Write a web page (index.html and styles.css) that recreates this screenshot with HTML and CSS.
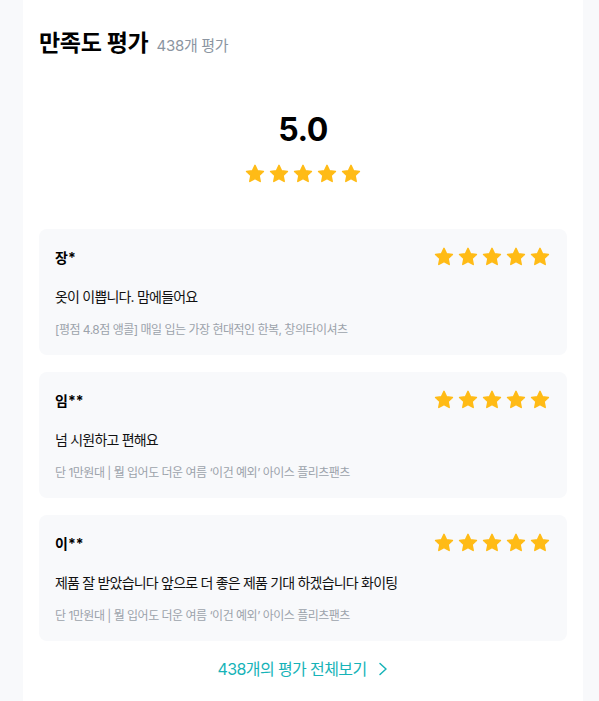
FILE: index.html
```html
<!DOCTYPE html>
<html lang="ko">
<head>
<meta charset="utf-8">
<link rel="stylesheet" href="styles.css">
</head>
<body>
<svg width="0" height="0" class="defs">
  <defs>
    <symbol id="star" viewBox="0 0 24 24">
      <path d="M12 2.6l2.8 5.9 6.4.8-4.7 4.4 1.2 6.4L12 17l-5.7 3.1 1.2-6.4-4.7-4.4 6.4-.8z" fill="#ffbb16" stroke="#ffbb16" stroke-width="1.6" stroke-linejoin="round"/>
    </symbol>
  </defs>
</svg>
<main class="panel">
  <h2 class="title">만족도 평가 <span class="count">438개 평가</span></h2>
  <section class="summary">
    <div class="score">5.0</div>
    <div class="stars stars-lg">
      <svg><use href="#star"/></svg><svg><use href="#star"/></svg><svg><use href="#star"/></svg><svg><use href="#star"/></svg><svg><use href="#star"/></svg>
    </div>
  </section>
  <ul class="reviews">
    <li class="card">
      <div class="card-head">
        <span class="name">장*</span>
        <div class="stars"><svg><use href="#star"/></svg><svg><use href="#star"/></svg><svg><use href="#star"/></svg><svg><use href="#star"/></svg><svg><use href="#star"/></svg></div>
      </div>
      <p class="text">옷이 이쁩니다. 맘에들어요</p>
      <p class="product">[평점 4.8점 앵콜] 매일 입는 가장 현대적인 한복, 창의타이셔츠</p>
    </li>
    <li class="card">
      <div class="card-head">
        <span class="name">임**</span>
        <div class="stars"><svg><use href="#star"/></svg><svg><use href="#star"/></svg><svg><use href="#star"/></svg><svg><use href="#star"/></svg><svg><use href="#star"/></svg></div>
      </div>
      <p class="text">넘 시원하고 편해요</p>
      <p class="product">단 1만원대 | 뭘 입어도 더운 여름 ‘이건 예외’ 아이스 플리츠팬츠</p>
    </li>
    <li class="card">
      <div class="card-head">
        <span class="name">이**</span>
        <div class="stars"><svg><use href="#star"/></svg><svg><use href="#star"/></svg><svg><use href="#star"/></svg><svg><use href="#star"/></svg><svg><use href="#star"/></svg></div>
      </div>
      <p class="text">제품 잘 받았습니다 앞으로 더 좋은 제품 기대 하겠습니다 화이팅</p>
      <p class="product">단 1만원대 | 뭘 입어도 더운 여름 ‘이건 예외’ 아이스 플리츠팬츠</p>
    </li>
  </ul>
  <a class="more" href="#">438개의 평가 전체보기
    <svg class="chev" viewBox="0 0 12 16"><path d="M3 2.5l6 5.5-6 5.5" fill="none" stroke="#16b3b8" stroke-width="1.5" stroke-linecap="round" stroke-linejoin="round"/></svg>
  </a>
</main>
</body>
</html>
```
FILE: styles.css
```css
html, body {
  margin: 0;
  padding: 0;
  background: #f8f9fb;
  font-family: Inter, "Noto Sans CJK KR", sans-serif;
  color: #111;
}
.defs { position: absolute; }
.panel {
  margin-left: 23px;
  width: 560px;
  min-height: 701px;
  box-sizing: border-box;
  padding: 27px 16px 0;
  background: #fff;
  display: flex;
  flex-direction: column;
}
.title {
  margin: 0;
  font-size: 23px;
  font-weight: 700;
  line-height: 32px;
  letter-spacing: -0.3px;
  color: #000;
}
.count {
  font-size: 15px;
  font-weight: 400;
  color: #8b95a1;
  margin-left: 3px;
  letter-spacing: -0.3px;
}
.summary {
  display: flex;
  flex-direction: column;
  align-items: center;
  margin-top: 48px;
}
.score {
  font-size: 32px;
  font-weight: 700;
  line-height: 40px;
  letter-spacing: -0.5px;
  color: #000;
}
.stars {
  display: flex;
  gap: 2px;
}
.stars svg {
  width: 22px;
  height: 22px;
}
.stars-lg { margin-top: 13px; }
.reviews {
  list-style: none;
  margin: 44px 0 0;
  padding: 0;
  display: flex;
  flex-direction: column;
  gap: 17px;
}
.card {
  background: #f8f9fb;
  border-radius: 8px;
  padding: 16px 16px 16px;
  height: 126px;
  box-sizing: border-box;
}
.card-head {
  display: flex;
  justify-content: space-between;
  align-items: center;
  height: 24px;
}
.name {
  font-size: 14px;
  font-weight: 700;
  color: #000;
}
.text {
  margin: 17px 0 0;
  font-size: 14px;
  line-height: 22px;
  letter-spacing: -0.8px;
  color: #111;
}
.product {
  margin: 13px 0 0;
  font-size: 12px;
  line-height: 18px;
  letter-spacing: -0.5px;
  color: #9ca3ab;
}
.more {
  margin-top: 16px;
  align-self: center;
  display: flex;
  align-items: center;
  gap: 10px;
  font-size: 16px;
  line-height: 24px;
  letter-spacing: -0.6px;
  color: #16b3b8;
  text-decoration: none;
}
.chev { width: 12px; height: 16px; }
```
